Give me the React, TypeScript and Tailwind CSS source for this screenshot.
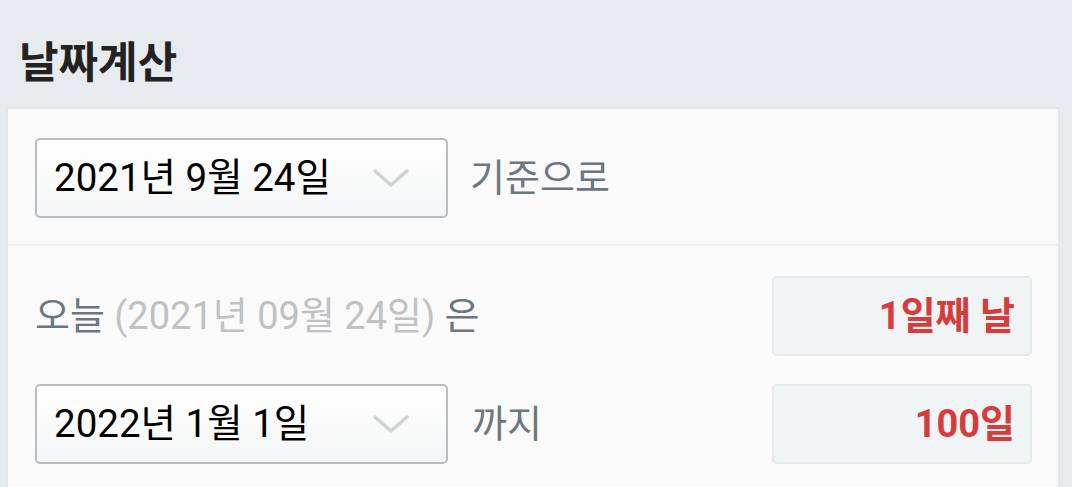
import React from "react";

const font = { fontFamily: 'Roboto, "Noto Sans CJK KR", sans-serif' };

function Chevron() {
  return (
    <svg width="38" height="22" viewBox="0 0 38 22" fill="none">
      <path d="M3 4 L19 18 L35 4" stroke="#cfd1d3" strokeWidth="3.5" strokeLinecap="round" strokeLinejoin="round" />
    </svg>
  );
}

function Select({ label }: { label: string }) {
  return (
    <div className="w-[413px] h-[80px] shrink-0 rounded-[5px] border-2 border-[#b9bdc1] bg-gradient-to-b from-white to-[#f4f5f6] flex items-center justify-between pl-[17px] pr-[36px]">
      <span className="text-[38.5px] text-black leading-none">{label}</span>
      <Chevron />
    </div>
  );
}

function Result({ text }: { text: string }) {
  return (
    <div className="w-[260px] h-[80px] rounded-[5px] border-2 border-[#e6e9eb] bg-[#f1f4f5] flex items-center justify-end pr-[15px]">
      <span className="text-[38px] font-bold text-[#d83b3b] leading-none">{text}</span>
    </div>
  );
}

export default function App() {
  return (
    <div className="w-[1072px] h-[487px] overflow-hidden bg-[#e8ebee]" style={font}>
      <div className="h-[107px] pt-[20px] pl-[19px] flex items-center">
        <h1 className="text-[43px] font-bold text-[#222222] leading-none">날짜계산</h1>
      </div>
      <div className="ml-[6px] w-[1054px] border-2 border-[#e4e6e8] bg-[#fafafa]">
        <div className="pl-[27px] pt-[29px] pb-[26px] flex items-center gap-[22px] border-b-2 border-[#eeeeee]">
          <Select label="2021년 9월 24일" />
          <span className="text-[38px] text-[#6b767e] leading-none">기준으로</span>
        </div>
        <div className="pl-[27px] pr-[26px] pt-[30px] flex flex-col gap-[28px]">
          <div className="flex items-center justify-between">
            <span className="text-[38px] text-[#6b767e] leading-none">
              오늘 <span className="text-[#bfc1c3]">(2021년 09월 24일)</span> 은
            </span>
            <Result text="1일째 날" />
          </div>
          <div className="flex items-center justify-between">
            <div className="flex items-center gap-[24px]">
              <Select label="2022년 1월 1일" />
              <span className="text-[38px] text-[#6b767e] leading-none">까지</span>
            </div>
            <Result text="100일" />
          </div>
          <div className="h-[40px]" />
        </div>
      </div>
    </div>
  );
}
